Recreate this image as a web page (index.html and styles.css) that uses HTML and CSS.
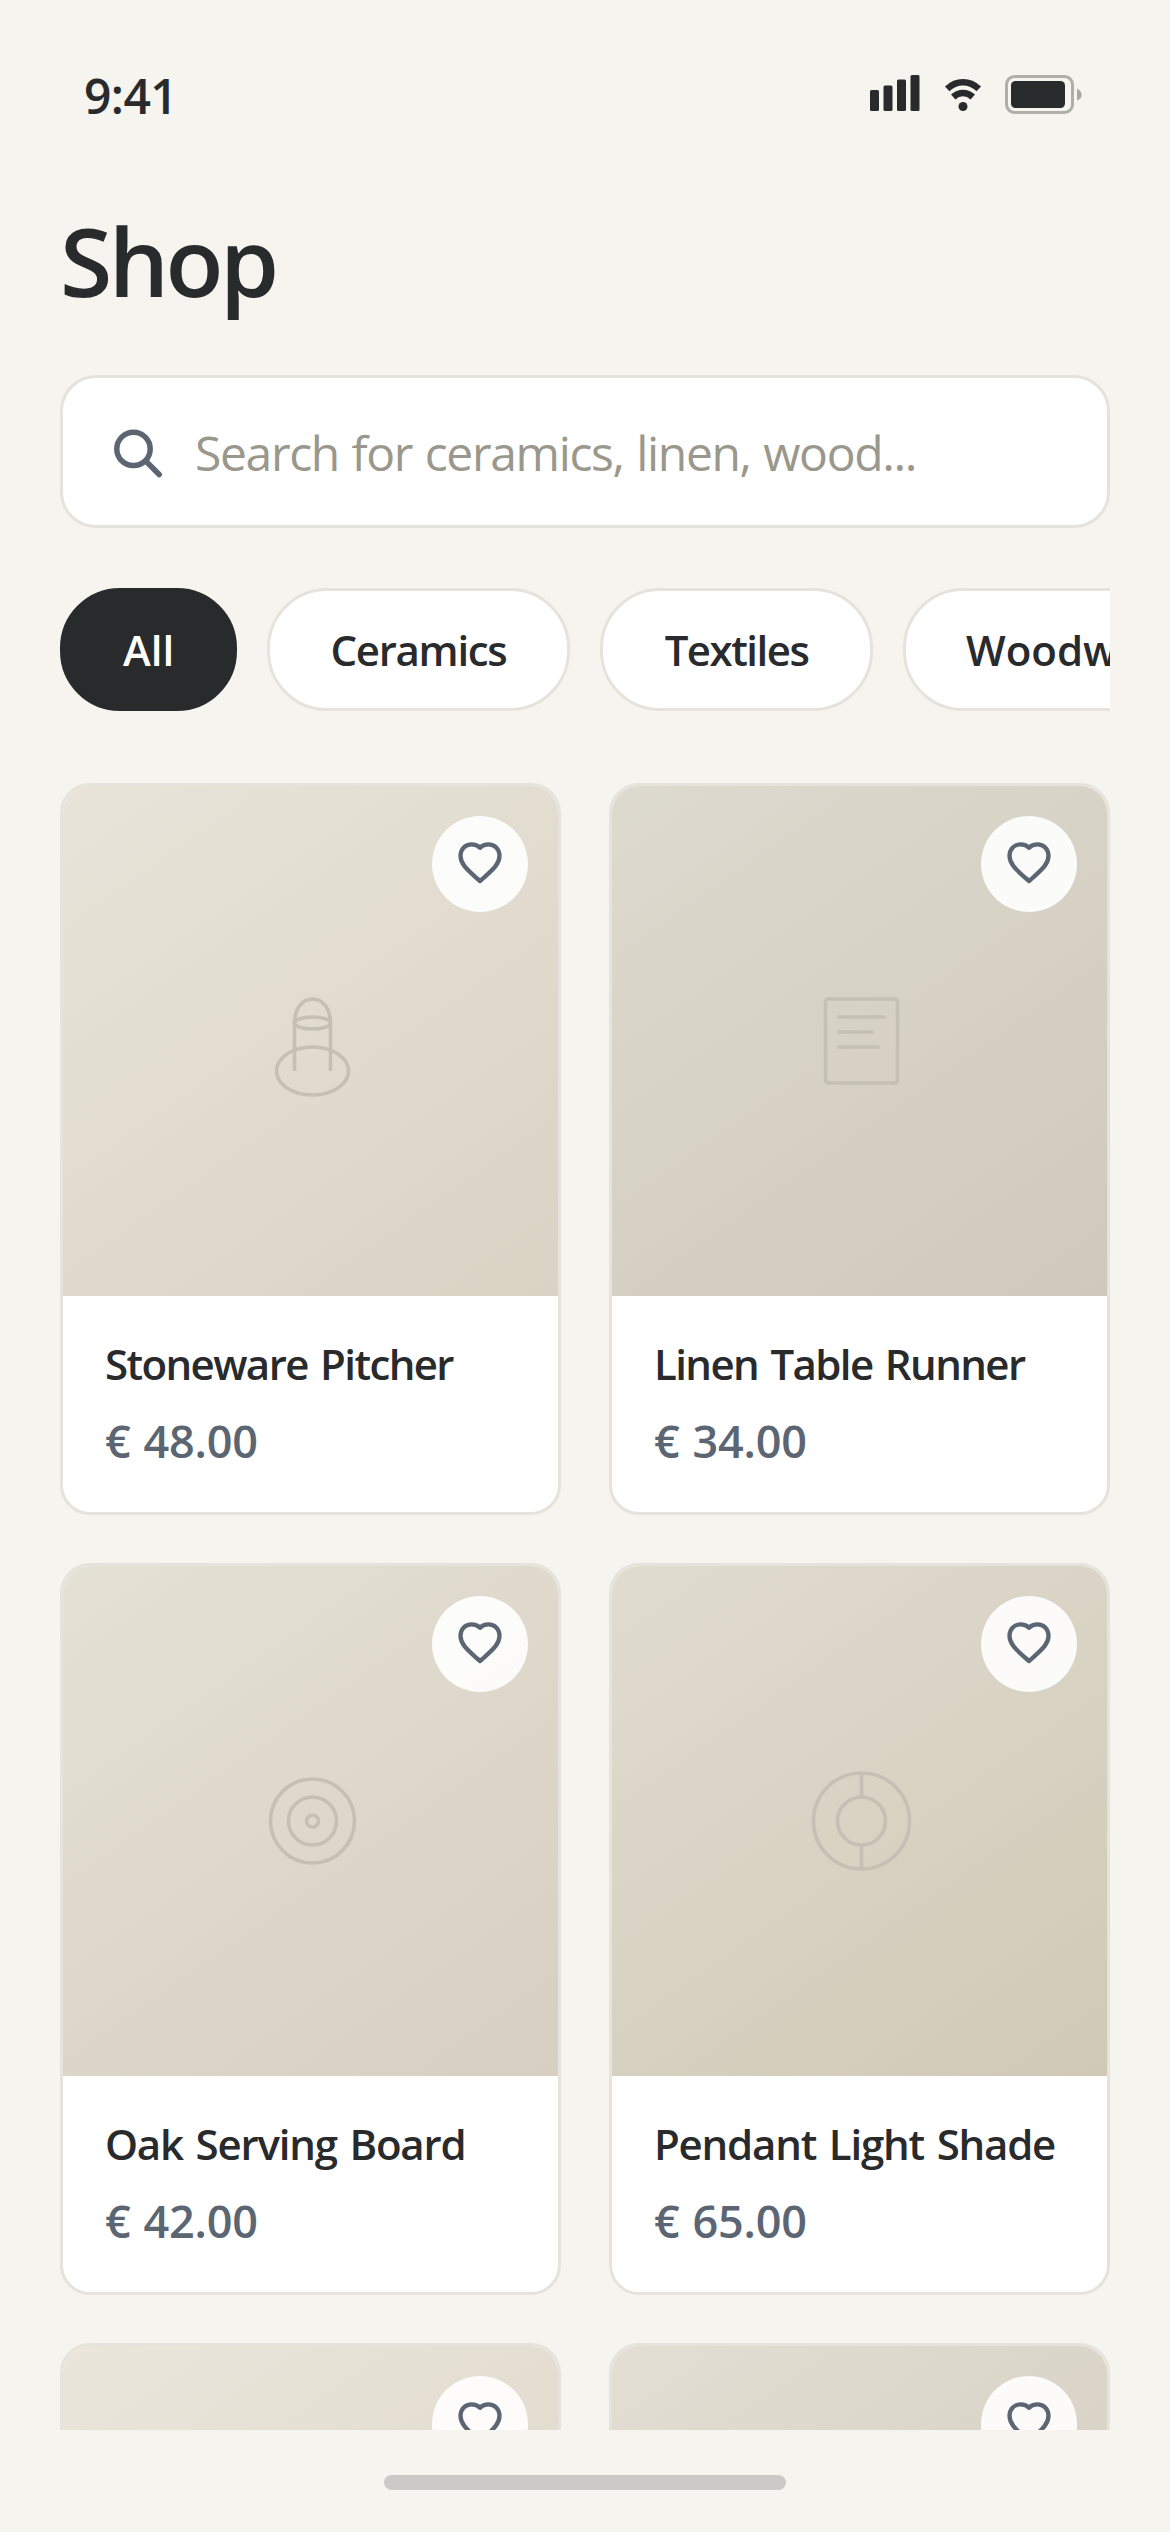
FILE: index.html
```html
<!DOCTYPE html>
<html lang="en">
<head>
<meta charset="utf-8">
<title>Shop</title>
<link rel="stylesheet" href="styles.css">
</head>
<body>
<svg class="defs" width="0" height="0" aria-hidden="true">
  <symbol id="heart" viewBox="0 0 96 96"><path d="M48 65L44.500 62C35 53.500 28.500 48 28.500 39.800C28.500 33 33.500 28.400 39.500 28.400C43 28.400 46 29.600 48 31.800C50 29.600 53 28.400 56.500 28.400C62.500 28.400 67.500 33 67.500 39.800C67.500 48 61 53.500 51.500 62Z" fill="none" stroke="#5c6673" stroke-width="4.300" stroke-linejoin="round"/></symbol>
</svg>
<div class="screen">
  <header class="status">
    <span class="time">9:41</span>
    <div class="status-icons">
      <svg width="51" height="45" viewBox="870 72 51 45" fill="#292a2c"><rect x="870" y="90" width="9" height="21" rx="1.5"/><rect x="883.500" y="85.500" width="9" height="25.500" rx="1.500"/><rect x="897" y="79.500" width="9" height="31.500" rx="1.500"/><rect x="910.500" y="75" width="9" height="36" rx="1.500"/></svg>
      <svg width="38" height="45" viewBox="944 72 38 45" fill="none" stroke="#292a2c" stroke-width="6.500"><path d="M947.200 88.800C956.500 80 969.500 80 978.800 88.800"/><path d="M953.200 97C959 91.700 967 91.700 972.800 97"/><circle cx="963" cy="106.500" r="4.500" fill="#292a2c" stroke="none"/></svg>
      <svg width="77" height="45" viewBox="1005 72 77 45"><rect x="1006.500" y="76.500" width="66" height="36" rx="8" fill="none" stroke="#afafaa" stroke-width="3"/><rect x="1011" y="81" width="54" height="27" rx="4.500" fill="#292a2c"/><path d="M1077 88.800C1083.200 91 1083.200 98.500 1077 100.500Z" fill="#a8a8a3"/></svg>
    </div>
  </header>
  <h1 class="title">Shop</h1>
  <div class="search">
    <svg width="60" height="60" viewBox="105 421.500 60 60" fill="none" stroke="#5c6673" stroke-width="5.500" stroke-linecap="round"><circle cx="133.500" cy="448.400" r="16.700"/><path d="M146 460.800L159.200 474"/></svg>
    <span class="placeholder">Search for ceramics, linen, wood...</span>
  </div>
  <nav class="filters">
    <span class="chip chip-all">All</span>
    <span class="chip chip-ceramics">Ceramics</span>
    <span class="chip chip-textiles">Textiles</span>
    <span class="chip chip-wood">Woodwork</span>
  </nav>
  <main class="grid">
    <article class="card">
      <div class="thumb thumb-1">
        <svg class="art" viewBox="-73.500 -72 144 144"><ellipse cy="30" rx="36" ry="24"/><path d="M-18 30V-18C-18 -32 -10.500 -42 0 -42S18 -32 18 -18V30"/><ellipse cy="-18" rx="18" ry="6"/></svg>
        <span class="like"><svg width="96" height="96"><use href="#heart"/></svg></span>
      </div>
      <div class="info"><span class="name">Stoneware Pitcher</span><span class="price">€ 48.00</span></div>
    </article>
    <article class="card">
      <div class="thumb thumb-2">
        <svg class="art" viewBox="-73.500 -72 144 144"><rect x="-36" y="-42" width="72" height="84" rx="3"/><path d="M-24 -24H24M-24 -9H12M-24 6H18"/></svg>
        <span class="like"><svg width="96" height="96"><use href="#heart"/></svg></span>
      </div>
      <div class="info"><span class="name">Linen Table Runner</span><span class="price">€ 34.00</span></div>
    </article>
    <article class="card">
      <div class="thumb thumb-3">
        <svg class="art" viewBox="-73.500 -72 144 144"><circle r="42"/><circle r="24"/><circle r="6"/></svg>
        <span class="like"><svg width="96" height="96"><use href="#heart"/></svg></span>
      </div>
      <div class="info"><span class="name name-loose">Oak Serving Board</span><span class="price">€ 42.00</span></div>
    </article>
    <article class="card">
      <div class="thumb thumb-4">
        <svg class="art" viewBox="-73.500 -72 144 144"><circle r="48"/><circle r="24"/><path d="M0 -48V-24M0 24V48"/></svg>
        <span class="like"><svg width="96" height="96"><use href="#heart"/></svg></span>
      </div>
      <div class="info"><span class="name name-loose">Pendant Light Shade</span><span class="price">€ 65.00</span></div>
    </article>
    <article class="card">
      <div class="thumb thumb-5"><span class="like"><svg width="96" height="96"><use href="#heart"/></svg></span></div>
    </article>
    <article class="card">
      <div class="thumb thumb-6"><span class="like"><svg width="96" height="96"><use href="#heart"/></svg></span></div>
    </article>
  </main>
  <footer class="home"><div class="home-bar"></div></footer>
</div>
</body>
</html>
```
FILE: styles.css
```css
* { box-sizing: border-box; }
body { margin: 0; background: #f5f4ef; color: #292a2c; font-family: "Open Sans", "Noto Sans", sans-serif; }
svg { display: block; flex: none; }
.defs { position: absolute; }
.screen { width: 1170px; height: 2532px; display: flex; flex-direction: column; overflow: hidden; background: #f5f4ef; }
.status { height: 141px; padding: 48px 88px 0 84px; display: flex; align-items: center; justify-content: space-between; flex: none; }
.time { font-size: 48px; line-height: 48px; padding-top: 3px; font-weight: 600; letter-spacing: -0.6px; }
.status-icons { display: flex; gap: 23px; }
.title { margin: 55px 60px 0; font-size: 95px; line-height: 129px; font-weight: 600; letter-spacing: -3.5px; }
.search { margin: 50px 60px 0; height: 153px; flex: none; display: flex; align-items: center; gap: 30px; padding: 0 42px; background: #fff; border: 3px solid #e5e3dc; border-radius: 36px; }
.placeholder { font-size: 48px; line-height: 60px; padding-top: 2px; color: #9a978c; white-space: nowrap; letter-spacing: -1.35px; word-spacing: 1.5px; }
.filters { margin: 60px 60px 0; display: flex; gap: 30px; overflow: hidden; flex: none; }
.chip { flex: none; height: 123px; display: flex; align-items: center; justify-content: center; border: 3px solid #e5e3dc; border-radius: 60px; background: #fff; font-size: 42px; font-weight: 600; white-space: nowrap; }
.chip-all { width: 177px; background: #292a2c; border-color: #292a2c; color: #fff; }
.chip-ceramics { width: 303px; letter-spacing: -1.3px; }
.chip-textiles { width: 273px; letter-spacing: -1.5px; }
.chip-wood { width: 330px; justify-content: flex-start; padding-left: 60px; }
.grid { margin: 72px 60px 0; flex: 1; min-height: 0; overflow: hidden; display: grid; grid-template-columns: 501px 501px; grid-auto-rows: 732px; gap: 48px; }
.card { display: flex; flex-direction: column; overflow: hidden; background: #fff; border: 3px solid #e5e3dc; border-radius: 30px; }
.thumb { position: relative; flex: none; height: 510px; display: flex; align-items: center; justify-content: center; }
.thumb-1 { background: linear-gradient(145deg, #e8e4d9, #d9d3c4); }
.thumb-2 { background: linear-gradient(145deg, #dddacf, #d0c9bb); }
.thumb-3 { background: linear-gradient(145deg, #e4e1d5, #d7cfc1); }
.thumb-4 { background: linear-gradient(145deg, #e0dcd0, #d0c9b6); }
.thumb-5 { background: linear-gradient(145deg, #eae6db, #dcd4c6); }
.thumb-6 { background: linear-gradient(145deg, #e2ded3, #d0cabb); }
.art { width: 144px; height: 144px; fill: none; stroke: #c4c0b3; stroke-width: 3.6px; }
.like { position: absolute; top: 30px; right: 30px; width: 96px; height: 96px; border-radius: 50%; background: rgba(255, 255, 255, .9); }
.info { display: flex; flex-direction: column; gap: 17px; padding: 38px 42px 0; white-space: nowrap; }
.name { font-size: 42px; line-height: 60px; font-weight: 600; letter-spacing: -1.6px; word-spacing: 3px; }
.name-loose { letter-spacing: -1.2px; }
.price { font-size: 45px; line-height: 60px; font-weight: 600; color: #5c6673; letter-spacing: -0.2px; word-spacing: 1.5px; }
.home { height: 102px; flex: none; display: flex; justify-content: center; padding-top: 45px; }
.home-bar { width: 402px; height: 15px; border-radius: 8px; background: #cccac6; }
```
